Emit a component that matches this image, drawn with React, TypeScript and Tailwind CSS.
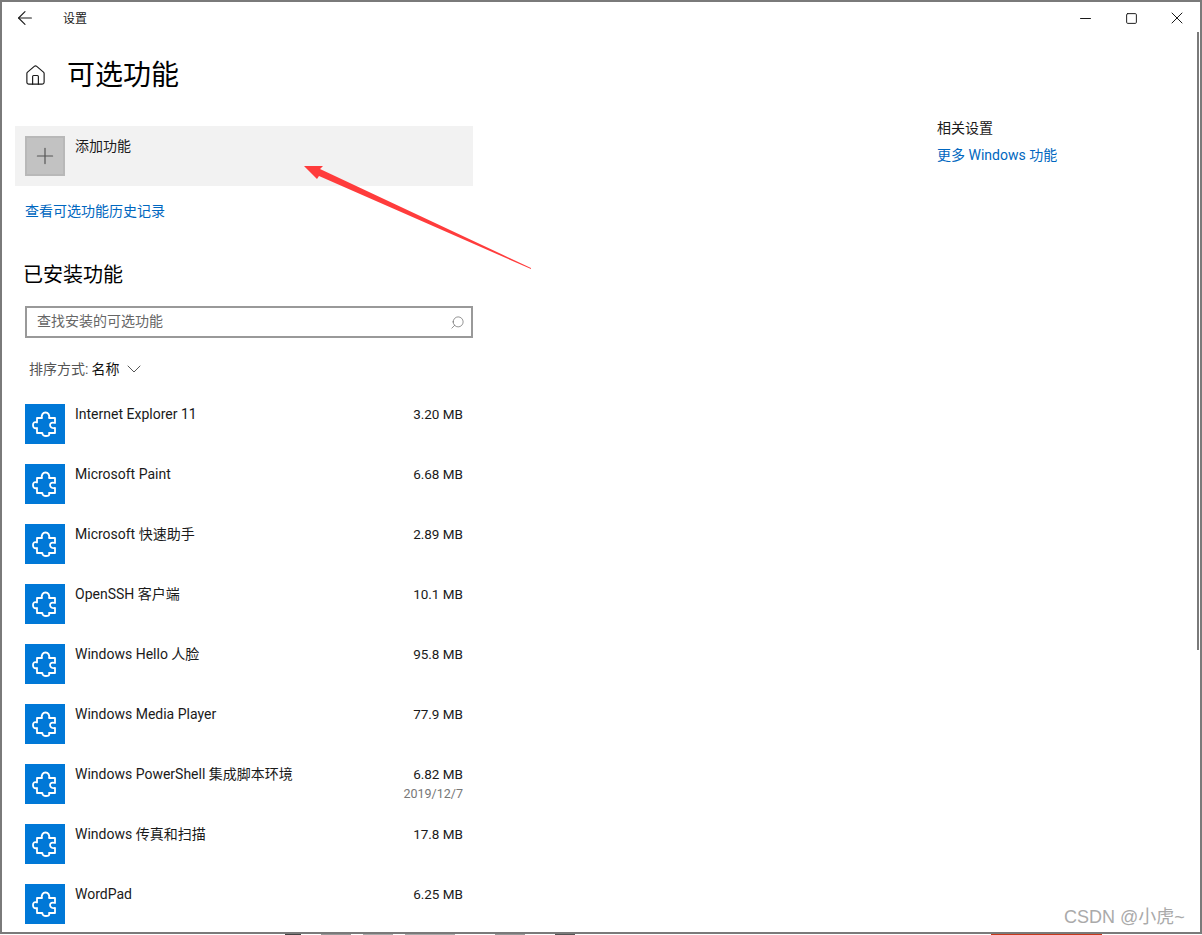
import { ArrowLeft, ChevronDown, Home, Minus, Plus, Search, Square, X } from "lucide-react";

const FEATURES = [
  { name: "Internet Explorer 11", size: "3.20 MB" },
  { name: "Microsoft Paint", size: "6.68 MB" },
  { name: "Microsoft 快速助手", size: "2.89 MB" },
  { name: "OpenSSH 客户端", size: "10.1 MB" },
  { name: "Windows Hello 人脸", size: "95.8 MB" },
  { name: "Windows Media Player", size: "77.9 MB" },
  { name: "Windows PowerShell 集成脚本环境", size: "6.82 MB", date: "2019/12/7" },
  { name: "Windows 传真和扫描", size: "17.8 MB" },
  { name: "WordPad", size: "6.25 MB" },
];

// scraps of the window behind, visible under the bottom border
const BEHIND = [
  { width: 285, color: "bg-white" },
  { width: 16, color: "bg-[#444444]" },
  { width: 20, color: "bg-white" },
  { width: 30, color: "bg-[#999999]" },
  { width: 12, color: "bg-white" },
  { width: 30, color: "bg-[#aaaaaa]" },
  { width: 12, color: "bg-white" },
  { width: 50, color: "bg-[#aaaaaa]" },
  { width: 40, color: "bg-white" },
  { width: 30, color: "bg-[#999999]" },
  { width: 30, color: "bg-white" },
  { width: 20, color: "bg-[#555555]" },
  { width: 416, color: "bg-white" },
  { width: 111, color: "bg-[#c8391b]" },
  { width: 100, color: "bg-white" },
];

const PuzzleIcon = () => (
  <svg width="40" height="40" viewBox="0 0 40 40" fill="none" aria-hidden="true">
    <path
      d="M12 14H17C16 11 18 8.5 20.5 8.5C23 8.5 25 11 24 14H30V19C27 18 25 19 25 21C25 23 27 24.5 30 24V29H24C25 31.5 23 32 21 32C19 32 17 31 17.5 29H12V24C9 25 8 23 8 21C8 19 9 17.5 12 18.5Z"
      stroke="white"
      strokeWidth="1.8"
      strokeLinejoin="round"
    />
  </svg>
);

export default function App() {
  return (
    <div className="relative flex h-[935px] w-[1202px] flex-col overflow-hidden bg-white font-['Roboto','Noto_Sans_CJK_SC',sans-serif] text-[14px] text-[#1a1a1a]">
      <div className="flex h-[934px] flex-col border-2 border-[#7a7a7a]">
        {/* Title bar */}
        <div className="flex h-[32px] shrink-0 items-center pl-[12px]">
          <ArrowLeft size={22} strokeWidth={1.2} />
          <span className="ml-[27px] pt-[1px] text-[12px]">设置</span>
          <div className="ml-auto flex items-center">
            <div className="flex w-[46px] justify-center">
              <Minus size={17} strokeWidth={1.5} />
            </div>
            <div className="flex w-[46px] justify-center">
              <Square size={13} strokeWidth={1.8} />
            </div>
            <div className="flex w-[46px] justify-center">
              <X size={20} strokeWidth={1.2} />
            </div>
          </div>
        </div>

        <div className="flex min-h-0 flex-1">
          {/* Left column */}
          <div className="w-[471px] shrink-0 pl-[13px]">
            <div className="flex h-[60px] items-center pt-[23px]">
              <Home size={23} strokeWidth={1.2} className="ml-[9px]" />
              <h1 className="ml-[20px] text-[28px] leading-none font-normal text-black">可选功能</h1>
            </div>

            <div className="mt-[32px] flex h-[60px] w-[458px] bg-[#f2f2f2] px-[10px] py-[10px]">
              <div className="flex h-[40px] w-[40px] items-center justify-center border-2 border-[#b8b8b8] bg-[#c2c2c2]">
                <Plus size={26} strokeWidth={1.1} className="text-[#555555]" />
              </div>
              <span className="ml-[10px] leading-[20px]">添加功能</span>
            </div>

            <a className="mt-[15px] ml-[10px] block leading-[20px] text-[#0067c0]">查看可选功能历史记录</a>

            <h2 className="mt-[40px] ml-[8px] text-[20px] leading-[28px] font-normal text-black">已安装功能</h2>

            <div className="mt-[17px] ml-[10px] flex h-[32px] w-[448px] items-center justify-between border-2 border-[#999999] pr-[6px] pl-[10px]">
              <span className="pb-[2px] text-[#666666]">查找安装的可选功能</span>
              <Search size={15} strokeWidth={1} className="-scale-x-100 text-[#555555]" />
            </div>

            <div className="mt-[21px] ml-[14px] flex h-[20px] items-center text-[#555555]">
              <span>排序方式:</span>
              <span className="ml-[3px] text-[#111111]">名称</span>
              <ChevronDown size={24} strokeWidth={1} className="ml-[3px]" />
            </div>

            {/* Installed features */}
            <div className="mt-[25px] ml-[10px] flex w-[438px] flex-col gap-[20px]">
              {FEATURES.map((feature) => (
                <div key={feature.name} className="flex h-[40px]">
                  <div className="h-[40px] w-[40px] shrink-0 bg-[#0078d7]">
                    <PuzzleIcon />
                  </div>
                  <span className="ml-[10px] leading-[20px]">{feature.name}</span>
                  <div className="ml-auto flex flex-col items-end">
                    <span className="text-[13.5px] leading-[20px]">{feature.size}</span>
                    {feature.date && <span className="text-[12.5px] leading-[20px] text-[#777777]">{feature.date}</span>}
                  </div>
                </div>
              ))}
            </div>
          </div>

          {/* Related settings */}
          <div className="ml-[464px] pt-[84px]">
            <div className="leading-[20px]">相关设置</div>
            <a className="mt-[7px] block leading-[20px] text-[#0067c0]">更多 Windows 功能</a>
          </div>
        </div>
      </div>

      <div className="flex h-px shrink-0">
        {BEHIND.map((scrap, i) => (
          <div key={i} className={scrap.color} style={{ width: scrap.width }} />
        ))}
      </div>

      {/* Scrollbar */}
      <div className="absolute top-[32px] left-[1197px] h-[618px] w-[2px] bg-[#7a7a7a]" />

      {/* Red annotation arrow */}
      <svg className="absolute top-0 left-0" width="1202" height="935" fill="none" aria-hidden="true">
        <polygon points="304,166 323,166 320,169 531,268 531,269 319,176 317,179" fill="#ff3c3c" />
      </svg>

      {/* Watermark */}
      <span className="absolute top-[905px] left-[1064px] font-['Liberation_Sans','Noto_Sans_CJK_SC',sans-serif] text-[18px] leading-[24px] text-[#aaaaaa]">
        CSDN @小虎~
      </span>
    </div>
  );
}
